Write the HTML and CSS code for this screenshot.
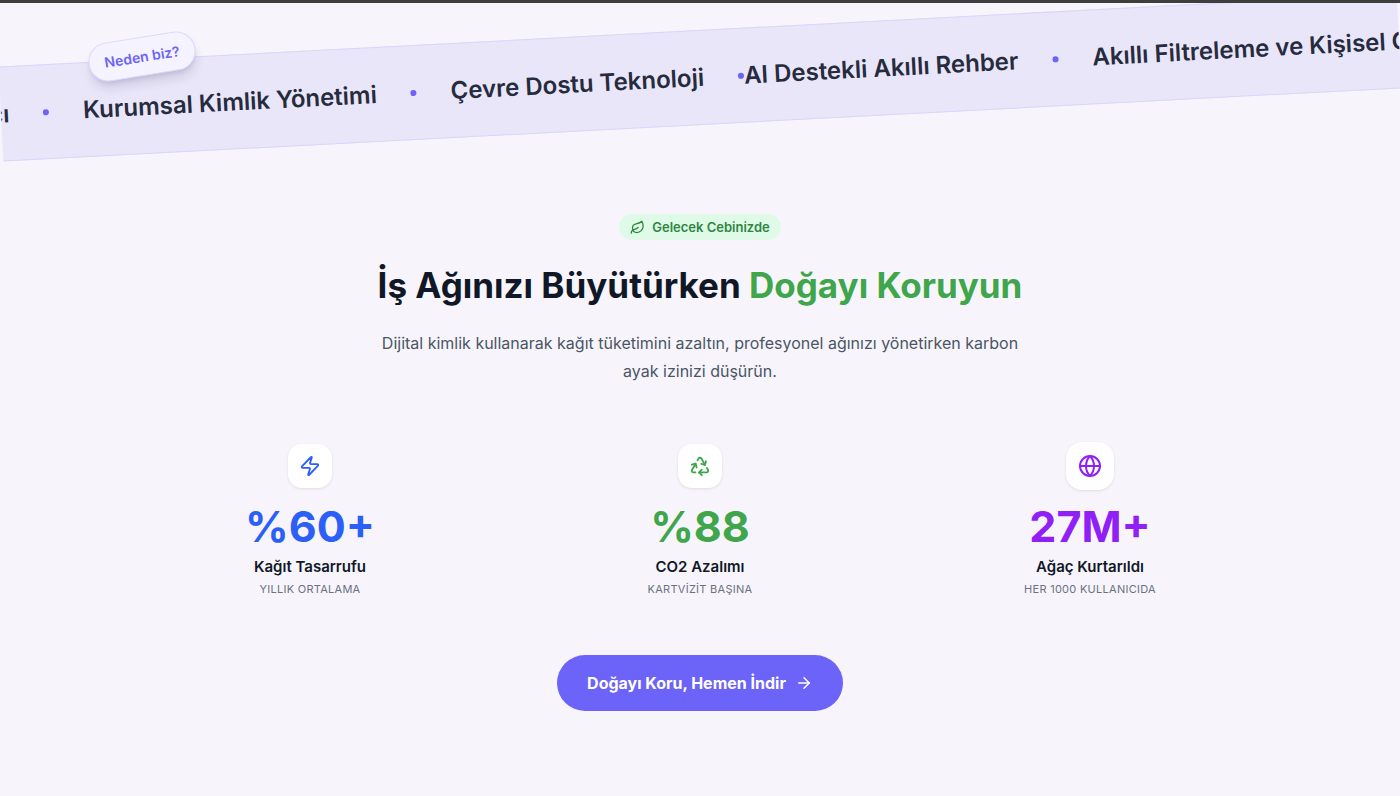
FILE: index.html
```html
<!DOCTYPE html>
<html lang="tr">
<head>
<meta charset="utf-8">
<meta name="viewport" content="width=device-width, initial-scale=1">
<title>Doğayı Koruyun</title>
<link rel="stylesheet" href="styles.css">
</head>
<body>
<section class="ribbon">
  <div class="ribbon-band">
    <ul class="ribbon-group ribbon-group-first">
      <li class="ribbon-item">cı</li>
      <li class="ribbon-item">Kurumsal Kimlik Yönetimi</li>
      <li class="ribbon-item">Çevre Dostu Teknoloji</li>
    </ul>
    <ul class="ribbon-group">
      <li class="ribbon-item">AI Destekli Akıllı Rehber</li>
      <li class="ribbon-item">Akıllı Filtreleme ve Kişisel G</li>
    </ul>
  </div>
  <span class="ribbon-tag">Neden biz?</span>
</section>

<main class="impact">
  <span class="badge">
    <svg class="badge-icon" viewBox="0 0 24 24" aria-hidden="true"><path d="M11 20A7 7 0 0 1 9.8 6.1C15.5 5 17 4.48 19 2c1 2 2 4.18 2 8 0 5.5-4.78 10-10 10Z"/><path d="M2 21c0-3 1.85-5.36 5.08-6C9.5 14.52 12 13 13 12"/></svg>
    Gelecek Cebinizde
  </span>
  <h1 class="title">İş Ağınızı Büyütürken <span class="title-accent">Doğayı Koruyun</span></h1>
  <p class="lead">Dijital kimlik kullanarak kağıt tüketimini azaltın, profesyonel ağınızı yönetirken karbon ayak izinizi düşürün.</p>

  <div class="stats">
    <article class="stat stat-blue">
      <div class="stat-tile">
        <svg class="stat-icon" viewBox="0 0 24 24" aria-hidden="true"><path d="M4 14a1 1 0 0 1-.78-1.63l9.9-10.2a.5.5 0 0 1 .86.46l-1.92 6.02A1 1 0 0 0 13 10h7a1 1 0 0 1 .78 1.63l-9.9 10.2a.5.5 0 0 1-.86-.46l1.92-6.02A1 1 0 0 0 11 14z"/></svg>
      </div>
      <strong class="stat-value">%60+</strong>
      <h2 class="stat-name">Kağıt Tasarrufu</h2>
      <p class="stat-note">YILLIK ORTALAMA</p>
    </article>
    <article class="stat stat-green">
      <div class="stat-tile">
        <svg class="stat-icon" viewBox="0 0 24 24" aria-hidden="true"><path d="M7 19H4.815a1.83 1.83 0 0 1-1.57-.881 1.785 1.785 0 0 1-.004-1.784L7.196 9.5"/><path d="M11 19h8.203a1.83 1.83 0 0 0 1.556-.89 1.784 1.784 0 0 0 0-1.775l-1.226-2.12"/><path d="m14 16-3 3 3 3"/><path d="M8.293 13.596 7.196 9.5 3.1 10.598"/><path d="m9.344 5.811 1.093-1.892A1.83 1.83 0 0 1 11.985 3a1.784 1.784 0 0 1 1.546.888l3.943 6.843"/><path d="m13.378 9.633 4.096 1.098 1.097-4.096"/></svg>
      </div>
      <strong class="stat-value">%88</strong>
      <h2 class="stat-name">CO2 Azalımı</h2>
      <p class="stat-note">KARTVİZİT BAŞINA</p>
    </article>
    <article class="stat stat-purple">
      <div class="stat-tile stat-tile-large">
        <svg class="stat-icon" viewBox="0 0 24 24" aria-hidden="true"><circle cx="12" cy="12" r="10"/><path d="M12 2a14.5 14.5 0 0 0 0 20 14.5 14.5 0 0 0 0-20"/><path d="M2 12h20"/></svg>
      </div>
      <strong class="stat-value">27M+</strong>
      <h2 class="stat-name">Ağaç Kurtarıldı</h2>
      <p class="stat-note">HER 1000 KULLANICIDA</p>
    </article>
  </div>

  <button class="cta" type="button">
    Doğayı Koru, Hemen İndir
    <svg class="cta-icon" viewBox="0 0 24 24" aria-hidden="true"><path d="M5 12h14"/><path d="m12 5 7 7-7 7"/></svg>
  </button>
</main>
</body>
</html>
```
FILE: styles.css
```css
* {
  box-sizing: border-box;
}

body {
  margin: 0;
  min-height: 100vh;
  background: #f7f5fb;
  border-top: 3px solid #3f3e3f;
  font-family: Inter, "Liberation Sans", sans-serif;
  color: #101828;
  overflow-x: hidden;
}

h1, h2, p, ul {
  margin: 0;
  padding: 0;
}

svg {
  fill: none;
  stroke: currentColor;
  stroke-width: 2;
  stroke-linecap: round;
  stroke-linejoin: round;
}

/* Tilted ribbon */
.ribbon {
  position: relative;
  padding: 27px 0 42px;
  overflow: hidden;
}

.ribbon-band {
  display: flex;
  padding: 29px 0 28px;
  background: #e9e6f9;
  border: solid #dad6fb;
  border-width: 1px 0;
  overflow: hidden;
  transform: rotate(-3deg);
}

.ribbon-group {
  display: flex;
  flex: none;
  list-style: none;
}

.ribbon-group-first {
  margin-left: -12px;
}

.ribbon-item {
  display: flex;
  align-items: center;
  font-size: 24px;
  font-weight: 600;
  line-height: 36px;
  color: #262b3d;
  white-space: nowrap;
}

.ribbon-item::after {
  content: "";
  width: 6px;
  height: 6px;
  margin-left: 34px;
  border-radius: 50%;
  background: #6c63f8;
}

.ribbon-item + .ribbon-item {
  margin-left: 34px;
}

.ribbon-tag {
  position: absolute;
  top: 34px;
  left: 88px;
  padding: 8px 15px;
  border: 1px solid #dcd8fc;
  border-radius: 20px;
  background: #f5f3ff;
  box-shadow: 0 8px 12px -2px rgb(30 20 80 / 14%), 0 3px 5px -2px rgb(30 20 80 / 12%);
  font-size: 14px;
  font-weight: 600;
  line-height: 21px;
  color: #6c63f8;
  transform: rotate(-9deg);
}

/* Impact section */
.impact {
  display: flex;
  flex-direction: column;
  align-items: center;
  padding: 47px 24px 84px;
}

.badge {
  display: flex;
  align-items: center;
  gap: 7px;
  padding: 4px 11px;
  border-radius: 16px;
  background: #dffbe8;
  font-size: 13px;
  font-weight: 600;
  line-height: 18px;
  color: #2f8540;
}

.badge-icon {
  width: 15px;
  height: 15px;
}

.title {
  margin-top: 21px;
  font-size: 35px;
  font-weight: 700;
  line-height: 48px;
  text-align: center;
}

.title-accent {
  color: #3fa64b;
}

.lead {
  max-width: 660px;
  margin-top: 20px;
  font-size: 16px;
  line-height: 28px;
  color: #4a5565;
  text-align: center;
}

.stats {
  display: grid;
  grid-template-columns: repeat(3, 1fr);
  width: 100%;
  max-width: 1170px;
  margin-top: 57px;
}

.stat {
  display: flex;
  flex-direction: column;
  align-items: center;
  text-align: center;
}

.stat-tile {
  display: grid;
  place-items: center;
  width: 44px;
  height: 44px;
  margin: 2px 0;
  border-radius: 14px;
  background: #fff;
  box-shadow: 0 1px 3px rgb(0 0 0 / 10%);
}

.stat-tile-large {
  width: 48px;
  height: 48px;
  margin: 0;
  border-radius: 16px;
}

.stat-icon {
  width: 22px;
  height: 22px;
}

.stat-tile-large .stat-icon {
  width: 24px;
  height: 24px;
}

.stat-value {
  margin-top: 12px;
  font-size: 43px;
  font-weight: 700;
  line-height: 48px;
}

.stat-name {
  margin-top: 6px;
  font-size: 15px;
  font-weight: 600;
  line-height: 22px;
}

.stat-note {
  margin-top: 3px;
  font-size: 11px;
  line-height: 16px;
  letter-spacing: 0.025em;
  color: #6a7282;
}

.stat-blue .stat-tile,
.stat-blue .stat-value {
  color: #2b5ff6;
}

.stat-green .stat-tile,
.stat-green .stat-value {
  color: #3fa64b;
}

.stat-purple .stat-tile,
.stat-purple .stat-value {
  color: #9020f5;
}

.cta {
  display: flex;
  align-items: center;
  gap: 9px;
  margin-top: 58px;
  padding: 16px 30px;
  border: 0;
  border-radius: 28px;
  background: #6c63f8;
  font: 700 16px/24px Inter, "Liberation Sans", sans-serif;
  color: #fff;
}

.cta-icon {
  width: 18px;
  height: 18px;
}
```
